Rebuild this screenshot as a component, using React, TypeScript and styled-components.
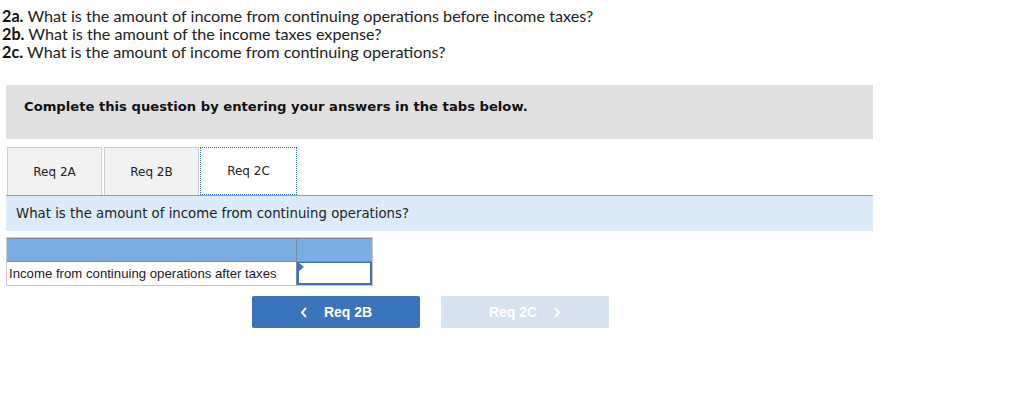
import React from "react";
import styled, { createGlobalStyle } from "styled-components";

const Global = createGlobalStyle`
  html, body { margin: 0; padding: 0; background: #ffffff; }
  body { width: 1024px; height: 406px; overflow: hidden; }
`;

const Page = styled.div`
  display: flex;
  flex-direction: column;
  align-items: flex-start;
`;

const Questions = styled.div`
  padding: 7px 0 0 2px;
  font-family: Lato, "Open Sans", sans-serif;
  font-size: 16.2px;
  line-height: 18px;
  color: #222;
`;

const QLine = styled.div`
  b { font-weight: 700; color: #111; }
`;

const Instruction = styled.div`
  margin: 24px 0 0 6px;
  width: 867px;
  height: 54px;
  box-sizing: border-box;
  background: #e0e0e0;
  padding: 14px 0 0 18px;
  line-height: 16px;
  font-family: "DejaVu Sans", Verdana, sans-serif;
  font-weight: 700;
  font-size: 13.15px;
  color: #111;
`;

const TabStrip = styled.div`
  margin: 8px 0 0 6px;
  width: 867px;
  box-sizing: border-box;
  padding-left: 1px;
  display: flex;
  gap: 2px;
  border-bottom: 1px solid #9b9b9b;
`;

const Tab = styled.div<{ $active?: boolean }>`
  width: ${(p) => (p.$active ? "97px" : "95px")};
  height: 48px;
  box-sizing: border-box;
  display: flex;
  align-items: center;
  justify-content: center;
  font-family: "DejaVu Sans", Verdana, sans-serif;
  font-size: 12px;
  color: #222;
  background: ${(p) => (p.$active ? "#ffffff" : "#f2f2f2")};
  border: ${(p) => (p.$active ? "1px dotted #2f6fc8" : "1px solid #cfcfcf")};
  border-bottom: ${(p) => (p.$active ? "1px dotted #2f6fc8" : "none")};
  margin-left: ${(p) => (p.$active ? "-1px" : "0")};
`;

const Prompt = styled.div`
  margin-left: 6px;
  width: 867px;
  height: 35px;
  box-sizing: border-box;
  background: #dbebf9;
  display: flex;
  align-items: center;
  padding-left: 10px;
  font-family: "DejaVu Sans", Verdana, sans-serif;
  font-size: 13.3px;
  color: #222;
`;

const Table = styled.div`
  margin: 6px 0 0 6px;
  width: 367px;
  box-sizing: border-box;
  border: 1px solid #c8c8c8;
  display: grid;
  grid-template-columns: 290px 75px;
`;

const HeadCell = styled.div<{ $last?: boolean }>`
  height: 24px;
  box-sizing: border-box;
  background: #79ade4;
  border-top: 1px solid #7d8a99;
  border-right: ${(p) => (p.$last ? "none" : "1px solid #7d8a99")};
  border-bottom: 1px solid #7d8a99;
`;

const LabelCell = styled.div`
  height: 23px;
  box-sizing: border-box;
  display: flex;
  align-items: center;
  padding-left: 2px;
  font-family: "Liberation Sans", Arial, sans-serif;
  font-size: 13.2px;
  color: #222;
  border-right: 1px solid #7d8a99;
`;

const InputCell = styled.div`
  position: relative;
  height: 23px;
  box-sizing: border-box;
  border: 2px solid #3f72b8;
  border-top-width: 1px;
  background: #fff;
`;

const Marker = styled.div`
  position: absolute;
  left: 0;
  top: 0;
  width: 0;
  height: 0;
  border-top: 4px solid transparent;
  border-bottom: 4px solid transparent;
  border-left: 5px solid #3f72b8;
`;

const NavRow = styled.div`
  margin: 10px 0 0 252px;
  display: flex;
  gap: 21px;
`;

const NavButton = styled.div<{ $disabled?: boolean }>`
  width: 168px;
  height: 32px;
  box-sizing: border-box;
  border-radius: 2px;
  background: ${(p) => (p.$disabled ? "#d6e2f0" : "#3a74ba")};
  color: #ffffff;
  display: flex;
  align-items: center;
  justify-content: center;
  gap: 16px;
  font-family: "Liberation Sans", Arial, sans-serif;
  font-weight: 700;
  font-size: 14px;
  svg { display: block; }
`;

const Chevron = ({ dir }: { dir: "left" | "right" }) => (
  <svg width="8" height="11" viewBox="0 0 8 11">
    <path
      d={dir === "left" ? "M6 1 L2 5.5 L6 10" : "M2 1 L6 5.5 L2 10"}
      fill="none"
      stroke="#ffffff"
      strokeWidth="2"
    />
  </svg>
);

export default function App() {
  return (
    <>
      <Global />
      <Page>
        <Questions>
          <QLine><b>2a.</b> What is the amount of income from continuing operations before income taxes?</QLine>
          <QLine><b>2b.</b> What is the amount of the income taxes expense?</QLine>
          <QLine><b>2c.</b> What is the amount of income from continuing operations?</QLine>
        </Questions>
        <Instruction>Complete this question by entering your answers in the tabs below.</Instruction>
        <TabStrip>
          <Tab>Req 2A</Tab>
          <Tab>Req 2B</Tab>
          <Tab $active>Req 2C</Tab>
        </TabStrip>
        <Prompt>What is the amount of income from continuing operations?</Prompt>
        <Table>
          <HeadCell />
          <HeadCell $last />
          <LabelCell>Income from continuing operations after taxes</LabelCell>
          <InputCell><Marker /></InputCell>
        </Table>
        <NavRow>
          <NavButton><Chevron dir="left" />Req 2B</NavButton>
          <NavButton $disabled>Req 2C<Chevron dir="right" /></NavButton>
        </NavRow>
      </Page>
    </>
  );
}
